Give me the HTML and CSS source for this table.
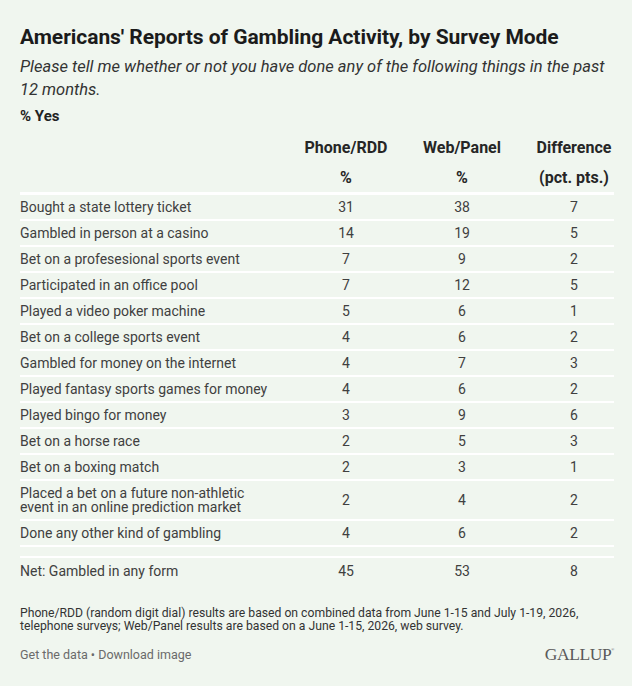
FILE: index.html
```html
<!DOCTYPE html>
<html>
<head>
<meta charset="utf-8">
<link rel="stylesheet" href="styles.css">
</head>
<body>
<div class="page">
  <h1 class="title">Americans' Reports of Gambling Activity, by Survey Mode</h1>
  <p class="subtitle">Please tell me whether or not you have done any of the following things in the past 12 months.</p>
  <p class="unit">% Yes</p>

  <div class="table">
    <div class="row head">
      <div class="label"></div>
      <div class="num">Phone/RDD</div>
      <div class="num">Web/Panel</div>
      <div class="num">Difference</div>
    </div>
    <div class="row head head2">
      <div class="label"></div>
      <div class="num">%</div>
      <div class="num">%</div>
      <div class="num">(pct. pts.)</div>
    </div>
    <div class="row"><div class="label">Bought a state lottery ticket</div><div class="num">31</div><div class="num">38</div><div class="num">7</div></div>
    <div class="row"><div class="label">Gambled in person at a casino</div><div class="num">14</div><div class="num">19</div><div class="num">5</div></div>
    <div class="row"><div class="label">Bet on a profesesional sports event</div><div class="num">7</div><div class="num">9</div><div class="num">2</div></div>
    <div class="row"><div class="label">Participated in an office pool</div><div class="num">7</div><div class="num">12</div><div class="num">5</div></div>
    <div class="row"><div class="label">Played a video poker machine</div><div class="num">5</div><div class="num">6</div><div class="num">1</div></div>
    <div class="row"><div class="label">Bet on a college sports event</div><div class="num">4</div><div class="num">6</div><div class="num">2</div></div>
    <div class="row"><div class="label">Gambled for money on the internet</div><div class="num">4</div><div class="num">7</div><div class="num">3</div></div>
    <div class="row"><div class="label">Played fantasy sports games for money</div><div class="num">4</div><div class="num">6</div><div class="num">2</div></div>
    <div class="row"><div class="label">Played bingo for money</div><div class="num">3</div><div class="num">9</div><div class="num">6</div></div>
    <div class="row"><div class="label">Bet on a horse race</div><div class="num">2</div><div class="num">5</div><div class="num">3</div></div>
    <div class="row"><div class="label">Bet on a boxing match</div><div class="num">2</div><div class="num">3</div><div class="num">1</div></div>
    <div class="row tall"><div class="label">Placed a bet on a future non-athletic<br>event in an online prediction market</div><div class="num">2</div><div class="num">4</div><div class="num">2</div></div>
    <div class="row"><div class="label">Done any other kind of gambling</div><div class="num">4</div><div class="num">6</div><div class="num">2</div></div>
    <div class="row spacer"></div>
    <div class="row last"><div class="label">Net: Gambled in any form</div><div class="num">45</div><div class="num">53</div><div class="num">8</div></div>
  </div>

  <p class="note">Phone/RDD (random digit dial) results are based on combined data from June 1-15 and July 1-19, 2026, telephone surveys; Web/Panel results are based on a June 1-15, 2026, web survey.</p>

  <div class="footer">
    <div class="links">Get the data • Download image</div>
    <div class="logo">GALLUP<span class="reg">®</span></div>
  </div>
</div>
</body>
</html>
```

FILE: styles.css
```css
html, body {
  margin: 0;
  padding: 0;
  background: #f0f6ef;
}
body {
  font-family: Roboto, "Liberation Sans", Arial, sans-serif;
  color: #333;
}
.page {
  width: 594px;
  padding: 25px 18px 0 20px;
}
.title {
  margin: 0;
  font-size: 21px;
  line-height: 24px;
  font-weight: 700;
  color: #1b1b1b;
  letter-spacing: -0.05px;
}
.subtitle {
  margin: 6px 0 0;
  font-size: 16.5px;
  line-height: 23px;
  font-style: italic;
  color: #333;
}
.unit {
  margin: 5px 0 0;
  font-size: 15px;
  line-height: 20px;
  font-weight: 700;
  color: #222;
}
.table {
  margin-top: 6px;
}
.row {
  display: grid;
  grid-template-columns: 1fr 88px 144px 80px;
  align-items: center;
  min-height: 24px;
  border-bottom: 2px solid #ffffff;
  font-size: 14px;
  line-height: 14.5px;
  color: #404040;
}
.row .num {
  text-align: center;
  white-space: nowrap;
}
.head {
  border-bottom: none;
  min-height: 32px;
  font-weight: 700;
  font-size: 16px;
  line-height: 18px;
  color: #262626;
}
.head2 {
  border-bottom: 3px solid #ffffff;
  min-height: 28px;
}
.tall {
  min-height: 38px;
}
.spacer {
  min-height: 9px;
}
.last {
  border-bottom: none;
  min-height: 27px;
}
.note {
  margin: 22px 0 0;
  font-size: 12.2px;
  line-height: 12.5px;
  color: #333;
}
.footer {
  margin-top: 12px;
  display: flex;
  justify-content: space-between;
  align-items: center;
}
.links {
  font-size: 12.5px;
  color: #6a6a6a;
}
.logo {
  font-family: "Liberation Serif", "Times New Roman", serif;
  font-size: 17.5px;
  color: #5a5a5a;
  letter-spacing: -0.4px;
}
.reg {
  font-size: 4px;
  vertical-align: 9px;
}
```
